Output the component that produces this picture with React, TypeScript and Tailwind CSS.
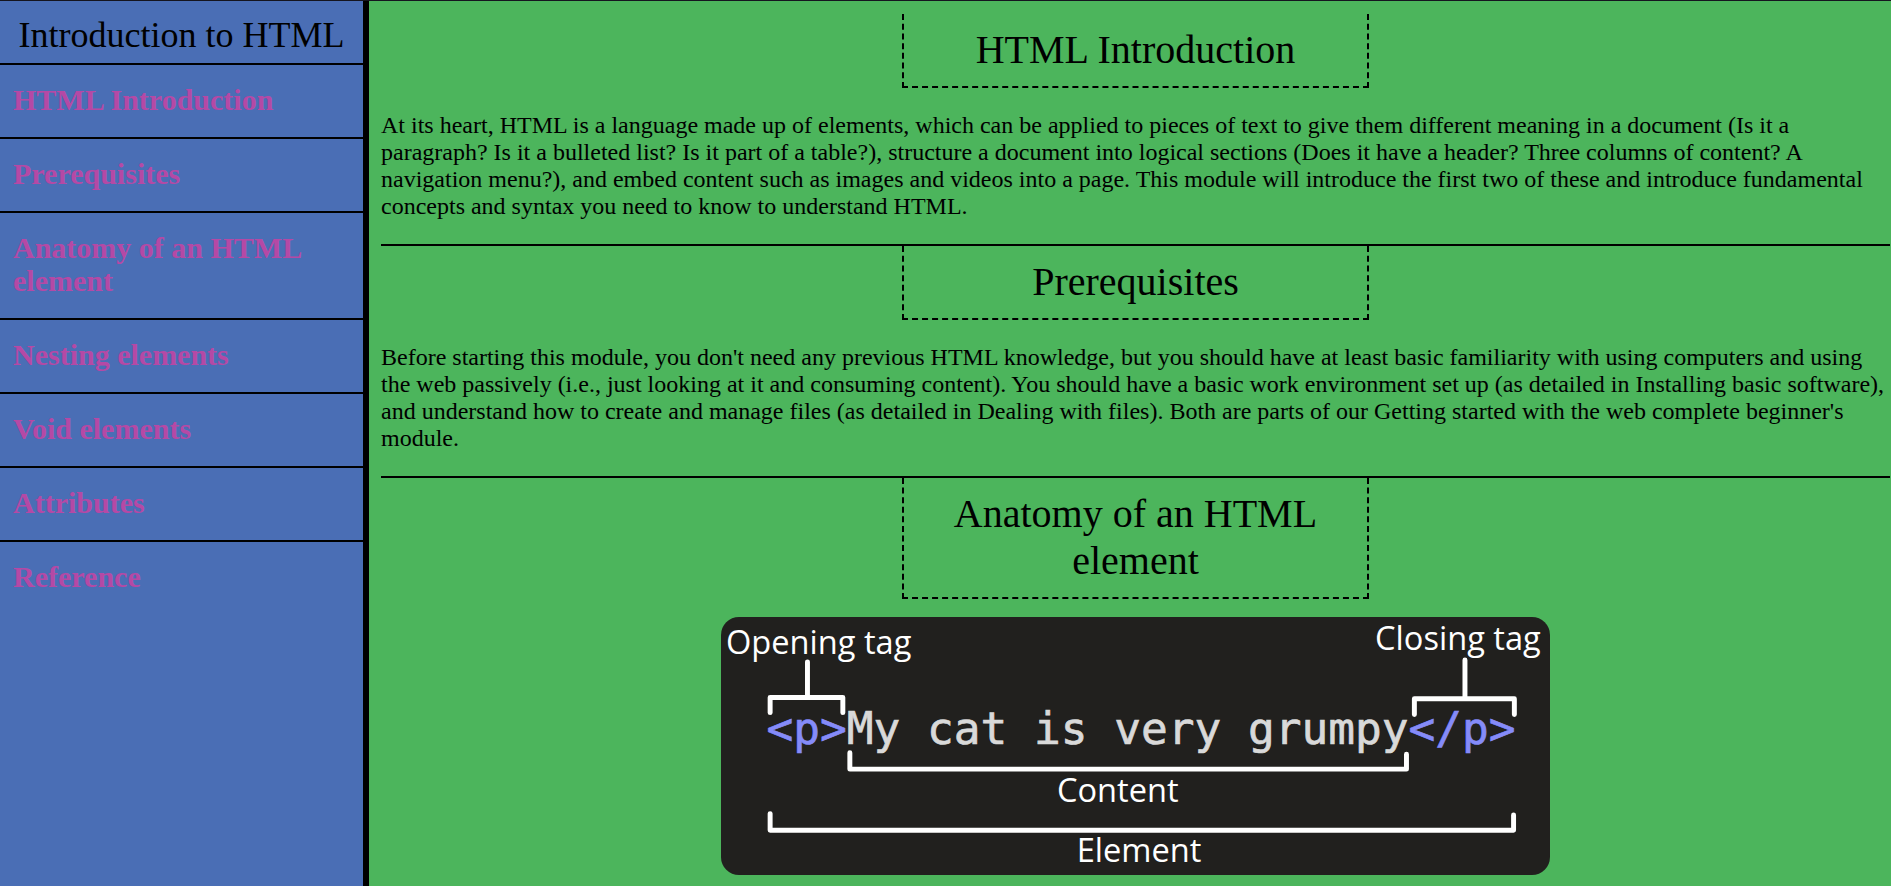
const topics = [
  { id: 'html-introduction', label: 'HTML Introduction' },
  { id: 'prerequisites', label: 'Prerequisites' },
  { id: 'anatomy', label: 'Anatomy of an HTML element' },
  { id: 'nesting-elements', label: 'Nesting elements' },
  { id: 'void-elements', label: 'Void elements' },
  { id: 'attributes', label: 'Attributes' },
  { id: 'reference', label: 'Reference' },
];

function SectionHeading({ children }: { children: string }) {
  return (
    <h2 className="mx-auto w-[31%] border-x-2 border-b-2 border-dashed border-black px-2 pt-3 pb-[13px] text-center text-[40px] leading-[47px]">
      {children}
    </h2>
  );
}

function AnatomyDiagram() {
  return (
    <svg
      viewBox="0 0 840 261"
      role="img"
      aria-label="Anatomy of an HTML element"
      className="mx-auto mt-[18px] block w-[55%] overflow-visible rounded-[18px] bg-[#21201e]"
    >
      <g fill="none" stroke="#fff" strokeWidth="5" strokeLinecap="round" strokeLinejoin="round">
        <path d="M49.7 96.8V81.4H123.3V96.8M87.5 81.4V45.4" />
        <path d="M701.8 98.8V82.8H803V98.8M753 82.8V43.4" />
        <path d="M130.4 137.3V154H693.8V139" />
        <path d="M49.7 199V215.9H802.2V200.5" />
      </g>
      <g fill="#fff" fontFamily="'Open Sans', sans-serif" fontSize="33">
        <text x="5" y="37">Opening tag</text>
        <text x="662" y="33">Closing tag</text>
        <text x="340" y="187">Content</text>
        <text x="360" y="248">Element</text>
      </g>
      <text
        x="46"
        y="129"
        fill="#d9d9d9"
        stroke="#d9d9d9"
        strokeWidth="0.7"
        fontFamily="'DejaVu Sans Mono', monospace"
        fontSize="45"
      >
        <tspan fill="#858bf9" stroke="#858bf9">&lt;p&gt;</tspan>My cat is very grumpy<tspan fill="#858bf9" stroke="#858bf9">&lt;/p&gt;</tspan>
      </text>
    </svg>
  );
}

export default function App() {
  return (
    <div className="flex min-h-screen border-t border-[#15151f] bg-[#4cb55c] font-['Liberation_Serif',serif] text-black">
      <nav className="w-[369px] shrink-0 border-r-[6px] border-black bg-[#4a6eb5]">
        <h1 className="pt-[14px] pb-2 text-center text-[36px] leading-[40px]">Introduction to HTML</h1>
        <ul>
          {topics.map((topic) => (
            <li key={topic.id} className="border-t-2 border-black">
              <a
                href={`#${topic.id}`}
                className="block pt-[18px] pr-3 pb-[21px] pl-[13px] text-[30px] leading-[33px] font-bold text-[#b549a5]"
              >
                {topic.label}
              </a>
            </li>
          ))}
        </ul>
      </nav>
      <main className="min-w-0 flex-1 pt-[13px] pr-px pl-3 text-[24px] leading-[27px]">
        <section id="html-introduction" className="border-b-2 border-black pb-6">
          <SectionHeading>HTML Introduction</SectionHeading>
          <p className="mt-6">
            At its heart, HTML is a language made up of elements, which can be applied to pieces of
            text to give them different meaning in a document (Is it a paragraph? Is it a bulleted
            list? Is it part of a table?), structure a document into logical sections (Does it have a
            header? Three columns of content? A navigation menu?), and embed content such as images
            and videos into a page. This module will introduce the first two of these and introduce
            fundamental concepts and syntax you need to know to understand HTML.
          </p>
        </section>
        <section id="prerequisites" className="border-b-2 border-black pb-6">
          <SectionHeading>Prerequisites</SectionHeading>
          <p className="mt-6">
            Before starting this module, you don't need any previous HTML knowledge, but you should
            have at least basic familiarity with using computers and using the web passively (i.e.,
            just looking at it and consuming content). You should have a basic work environment set
            up (as detailed in Installing basic software), and understand how to create and manage
            files (as detailed in Dealing with files). Both are parts of our Getting started with the
            web complete beginner's module.
          </p>
        </section>
        <section id="anatomy">
          <SectionHeading>Anatomy of an HTML element</SectionHeading>
          <AnatomyDiagram />
        </section>
      </main>
    </div>
  );
}
